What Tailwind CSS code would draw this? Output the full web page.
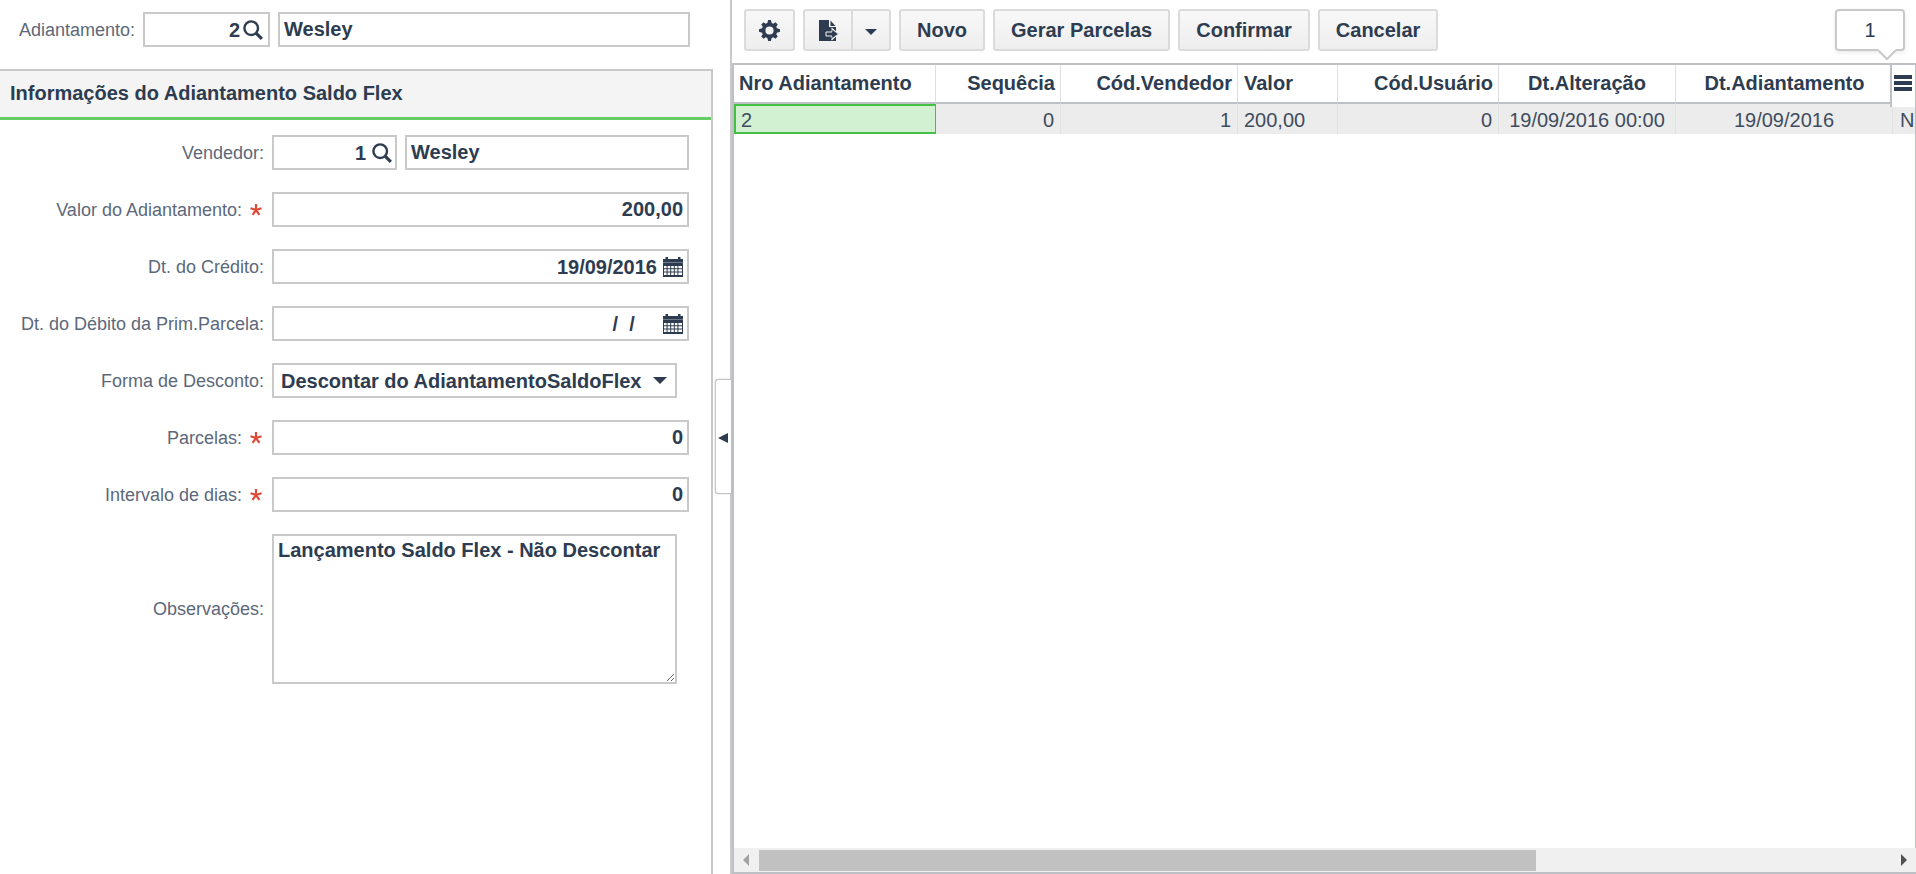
<!doctype html>
<html lang="pt-BR">
<head>
  <meta charset="UTF-8">
  <meta name="viewport" content="width=device-width, initial-scale=1.0">
  <title>Adiantamento Saldo Flex</title>
  <script src="https://cdn.jsdelivr.net/npm/@tailwindcss/browser@4"></script>
</head>
<body class="h-screen flex overflow-hidden bg-white font-['Liberation_Sans',Arial,sans-serif] text-[#2d3c50]">

  <!-- Ícones reutilizados -->
  <svg class="hidden">
    <symbol id="lupa" viewBox="0 0 20 20">
      <circle cx="8.2" cy="8.2" r="6.800" fill="none" stroke="currentColor" stroke-width="2.4"/>
      <path d="M12.800 12.800l6 6" stroke="currentColor" stroke-width="3.2"/>
    </symbol>
    <symbol id="calendario" viewBox="0 0 20 20">
      <path fill="currentColor" fill-rule="evenodd" d="M0 2h2.500V0h2.500v2h10V0h2.500v2H20v18H0zM1 9v2.300h2.600V9zM4.600 9v2.300h2.600V9zM8.200 9v2.300h2.600V9zM11.800 9v2.300h2.600V9zM15.400 9v2.300H19V9zM1 12.300v2.300h2.600v-2.300zM4.600 12.300v2.300h2.600v-2.300zM8.200 12.300v2.300h2.600v-2.300zM11.800 12.300v2.300h2.600v-2.300zM15.400 12.300v2.300H19v-2.300zM1 15.600v2.300h2.600v-2.300zM4.600 15.600v2.300h2.600v-2.300zM8.200 15.600v2.300h2.600v-2.300zM11.800 15.600v2.300h2.600v-2.300zM15.400 15.600v2.300H19v-2.300z"/>
      <path d="M0 5.500h20" stroke="#fff" stroke-opacity=".4" stroke-width=".8"/>
    </symbol>
    <symbol id="obrigatorio" viewBox="0 0 12 12">
      <path d="M6 6V0M6 6l5.500-1.800M6 6l3.400 4.800M6 6l-3.400 4.800M6 6L.5 4.200" fill="none" stroke="#dd4b39" stroke-width="2.200"/>
    </symbol>
  </svg>

  <!-- Formulário -->
  <form class="w-[730px] shrink-0 flex flex-col text-[18px]">
    <div class="flex items-center pt-3 pb-[22px] pr-10">
      <label for="adiantamento" class="w-[143px] pt-px pr-2 text-right text-[#5c687a]">Adiantamento:</label>
      <div class="w-[127px] h-[35px] flex items-center border-2 border-[#c9c9c9] pr-[5px]">
        <input id="adiantamento" value="2" class="flex-1 min-w-0 pr-[3px] text-right text-[20px] font-bold outline-none">
        <button type="button" aria-label="Pesquisar adiantamento"><svg class="size-5"><use href="#lupa"/></svg></button>
      </div>
      <input aria-label="Nome" value="Wesley" class="ml-2 flex-1 min-w-0 h-[35px] border-2 border-[#c9c9c9] px-1 text-[20px] font-bold outline-none">
    </div>

    <section class="w-[713px] flex-1 border-t-2 border-r-2 border-[#c9c9c9]">
      <h2 class="h-[49px] flex items-center border-b-3 border-[#66cc66] bg-[#f4f4f4] pl-[10px] pb-[2px] text-[20px] leading-6 font-bold">Informações do Adiantamento Saldo Flex</h2>

      <div class="flex flex-col gap-[22px] pt-[15px] pr-[22px]">
        <div class="flex items-center">
          <label for="vendedor" class="w-[272px] pt-px pr-2 text-right text-[#5c687a]">Vendedor:</label>
          <div class="w-[125px] h-[35px] flex items-center border-2 border-[#c9c9c9] pr-[3px]">
            <input id="vendedor" value="1" class="flex-1 min-w-0 pr-[6px] text-right text-[20px] font-bold outline-none">
            <button type="button" aria-label="Pesquisar vendedor"><svg class="size-5"><use href="#lupa"/></svg></button>
          </div>
          <input aria-label="Nome do vendedor" value="Wesley" class="ml-2 flex-1 min-w-0 h-[35px] border-2 border-[#c9c9c9] px-1 text-[20px] font-bold outline-none">
        </div>

        <div class="flex items-center">
          <label for="valor" class="w-[272px] pt-px pr-[10px] flex justify-end items-center gap-2 text-[#5c687a]">Valor do Adiantamento:
            <svg class="size-3"><use href="#obrigatorio"/></svg>
          </label>
          <input id="valor" value="200,00" class="flex-1 min-w-0 h-[35px] border-2 border-[#c9c9c9] px-1 text-right text-[20px] font-bold outline-none">
        </div>

        <div class="flex items-center">
          <label for="credito" class="w-[272px] pt-px pr-2 text-right text-[#5c687a]">Dt. do Crédito:</label>
          <div class="flex-1 h-[35px] flex items-center border-2 border-[#c9c9c9] pr-1">
            <input id="credito" value="19/09/2016" class="flex-1 min-w-0 pr-[6px] text-right text-[20px] font-bold outline-none">
            <button type="button" aria-label="Abrir calendário"><svg class="size-5"><use href="#calendario"/></svg></button>
          </div>
        </div>

        <div class="flex items-center">
          <label for="debito" class="w-[272px] pt-px pr-2 text-right text-[#5c687a]">Dt. do Débito da Prim.Parcela:</label>
          <div class="flex-1 h-[35px] flex items-center border-2 border-[#c9c9c9] pr-1">
            <input id="debito" value="  /  /    " class="flex-1 min-w-0 pr-[6px] text-right text-[20px] font-bold outline-none">
            <button type="button" aria-label="Abrir calendário"><svg class="size-5"><use href="#calendario"/></svg></button>
          </div>
        </div>

        <div class="flex items-center">
          <label for="forma" class="w-[272px] pt-px pr-2 text-right text-[#5c687a]">Forma de Desconto:</label>
          <div class="w-[405px] grid items-center">
            <select id="forma" class="col-start-1 row-start-1 h-[35px] appearance-none border-2 border-[#c9c9c9] pl-[7px] text-[20px] font-bold outline-none">
              <option>Descontar do AdiantamentoSaldoFlex</option>
            </select>
            <svg class="col-start-1 row-start-1 justify-self-end mr-[10px] w-[14px] h-[7px] pointer-events-none" viewBox="0 0 14 7"><path d="M0 0h14L7 7z" fill="currentColor"/></svg>
          </div>
        </div>

        <div class="flex items-center">
          <label for="parcelas" class="w-[272px] pt-px pr-[10px] flex justify-end items-center gap-2 text-[#5c687a]">Parcelas:
            <svg class="size-3"><use href="#obrigatorio"/></svg>
          </label>
          <input id="parcelas" value="0" class="flex-1 min-w-0 h-[35px] border-2 border-[#c9c9c9] px-1 text-right text-[20px] font-bold outline-none">
        </div>

        <div class="flex items-center">
          <label for="intervalo" class="w-[272px] pt-px pr-[10px] flex justify-end items-center gap-2 text-[#5c687a]">Intervalo de dias:
            <svg class="size-3"><use href="#obrigatorio"/></svg>
          </label>
          <input id="intervalo" value="0" class="flex-1 min-w-0 h-[35px] border-2 border-[#c9c9c9] px-1 text-right text-[20px] font-bold outline-none">
        </div>

        <div class="flex items-center">
          <label for="obs" class="w-[272px] pt-px pr-2 text-right text-[#5c687a]">Observações:</label>
          <textarea id="obs" class="w-[405px] h-[150px] border-2 border-[#c9c9c9] px-1 py-[2px] text-[20px] leading-6 font-bold outline-none">Lançamento Saldo Flex - Não Descontar</textarea>
        </div>
      </div>
    </section>
  </form>

  <main class="relative flex-1 min-w-0 flex flex-col border-l-2 border-[#c9c9c9]">
    <!-- Botão para recolher o formulário -->
    <button type="button" aria-label="Recolher painel" class="absolute -left-[17px] top-[379px] w-4 h-[115px] flex items-center justify-end pt-[2px] pr-[3px] border border-r-0 border-[#c4c4c4] rounded-l-[3px] bg-white shadow-[0_0_2px_rgba(0,0,0,0.2)]">
      <svg class="w-[10px] h-[10px]" viewBox="0 0 10 10"><path d="M10 0v10L0 5z" fill="currentColor"/></svg>
    </button>

    <!-- Barra de ferramentas -->
    <div class="h-[63px] flex items-start gap-2 pt-[9px] pl-3 pr-[11px] text-[20px] font-bold text-shadow-[0_1px_0_#fff]">
      <button type="button" aria-label="Configurações" class="w-[51px] h-[42px] flex items-center justify-center border-2 border-[#dbdbdb] rounded-[3px] bg-linear-to-b from-[#f8f8f8] to-[#eeeeee]">
        <svg class="size-[21px]" viewBox="0 0 22 22"><path fill="currentColor" fill-rule="evenodd" d="M9.600 0h2.800l.9 3.200 1.700.7 2.300-1.500 2.300 2.300L18.100 7l.7 1.700 3.200.9v2.800l-3.200.9-.7 1.700 1.500 2.300-2.300 2.300-2.300-1.500-1.700.7-.9 3.200H9.600l-.9-3.200-1.700-.7-2.300 1.500-2.300-2.300L3.900 15l-.7-1.700L0 12.400V9.600l3.200-.9L3.900 7 2.400 4.700l2.300-2.300L7 3.900l1.700-.7zM11 6.700a4.300 4.300 0 1 0 0 8.600 4.300 4.300 0 0 0 0-8.600z"/></svg>
      </button>
      <div class="h-[42px] flex border-2 border-[#dbdbdb] rounded-[3px] bg-linear-to-b from-[#f8f8f8] to-[#eeeeee]">
        <button type="button" aria-label="Exportar" class="w-[48px] flex items-center justify-center border-r-2 border-[#dbdbdb]">
          <svg class="w-[19px] h-[21px]" viewBox="0 0 19 21">
            <path d="M0 0h10v7h7v14H0z" fill="currentColor"/>
            <path d="M11.500 0.500l5 5.500h-5z" fill="currentColor"/>
            <path d="M12.500 8L19 14l-6.500 6" fill="none" stroke="#f4f4f4" stroke-width="1.200"/>
            <path d="M7 12h6V9.500l5.500 4.500-5.500 4.500V16H7z" fill="currentColor" stroke="#f4f4f4" stroke-width="1"/>
            <path d="M13.500 10l5.300 4-5.300 4z" fill="currentColor"/>
          </svg>
        </button>
        <button type="button" aria-label="Mais opções" class="w-9 flex items-center justify-center">
          <svg class="w-3 h-[6px] mt-[3px]" viewBox="0 0 12 6"><path d="M0 0h12L6 6z" fill="currentColor"/></svg>
        </button>
      </div>
      <button type="button" class="h-[42px] px-4 border-2 border-[#dbdbdb] rounded-[3px] bg-linear-to-b from-[#f8f8f8] to-[#eeeeee]">Novo</button>
      <button type="button" class="h-[42px] px-4 border-2 border-[#dbdbdb] rounded-[3px] bg-linear-to-b from-[#f8f8f8] to-[#eeeeee]">Gerar Parcelas</button>
      <button type="button" class="h-[42px] px-4 border-2 border-[#dbdbdb] rounded-[3px] bg-linear-to-b from-[#f8f8f8] to-[#eeeeee]">Confirmar</button>
      <button type="button" class="h-[42px] px-4 border-2 border-[#dbdbdb] rounded-[3px] bg-linear-to-b from-[#f8f8f8] to-[#eeeeee]">Cancelar</button>

      <!-- Contador de registros -->
      <div class="relative ml-auto w-[70px] h-[42px] flex items-center justify-center border-2 border-[#c9c9c9] rounded-[4px] bg-white font-normal shadow-[0_2px_4px_rgba(0,0,0,0.08)]">1
        <svg class="absolute top-[38px] right-[7px] w-[18px] h-[12px]" viewBox="0 0 18 12"><path d="M0 0h18v1L9 10 0 1z" fill="#fff"/><path d="M0 1l9 9 9-9" fill="none" stroke="#c9c9c9" stroke-width="2"/></svg>
      </div>
    </div>

    <!-- Grade -->
    <div class="flex-1 min-h-0 flex flex-col border-2 border-r-0 border-[#bdc1c5]">
      <div class="relative flex-1 overflow-hidden border-r border-[#bdc1c5]">
        <table class="w-[calc(100%+1px)] table-fixed border-separate border-spacing-0 text-[20px] leading-6 whitespace-nowrap">
          <colgroup>
            <col class="w-[202px]"><col class="w-[125px]"><col class="w-[177px]"><col class="w-[100px]"><col class="w-[161px]"><col class="w-[177px]"><col class="w-[217px]"><col>
          </colgroup>
          <thead>
            <tr class="h-[39px]">
              <th class="border-r border-b-2 border-r-[#dcdee0] border-b-[#bdc1c5] p-0 pb-[2px] pl-[5px] text-left">Nro Adiantamento</th>
              <th class="border-r border-b-2 border-r-[#dcdee0] border-b-[#bdc1c5] p-0 pb-[2px] pr-[5px] text-right">Sequêcia</th>
              <th class="border-r border-b-2 border-r-[#dcdee0] border-b-[#bdc1c5] p-0 pb-[2px] pr-[5px] text-right">Cód.Vendedor</th>
              <th class="border-r border-b-2 border-r-[#dcdee0] border-b-[#bdc1c5] p-0 pb-[2px] pl-[6px] text-left">Valor</th>
              <th class="border-r border-b-2 border-r-[#dcdee0] border-b-[#bdc1c5] p-0 pb-[2px] pr-[5px] text-right">Cód.Usuário</th>
              <th class="border-r border-b-2 border-r-[#dcdee0] border-b-[#bdc1c5] p-0 pb-[2px] text-center">Dt.Alteração</th>
              <th class="border-b-2 border-[#bdc1c5] p-0 pb-[2px] text-center">Dt.Adiantamento</th>
              <th class="p-0"></th>
            </tr>
          </thead>
          <tbody>
            <tr class="h-[30px] bg-[#ececec] text-[#3f4c5e]">
              <td class="border-2 border-r border-[#44c044] bg-[#d2f0d2] p-0 pt-[2px] pl-[5px]">2</td>
              <td class="border-r border-[#e2e2e2] p-0 pt-[2px] pr-[6px] text-right">0</td>
              <td class="border-r border-[#e2e2e2] p-0 pt-[2px] pr-[6px] text-right">1</td>
              <td class="border-r border-[#e2e2e2] p-0 pt-[2px] pl-[6px]">200,00</td>
              <td class="border-r border-[#e2e2e2] p-0 pt-[2px] pr-[6px] text-right">0</td>
              <td class="border-r border-[#e2e2e2] p-0 pt-[2px] text-center">19/09/2016 00:00</td>
              <td class="border-r border-[#e2e2e2] p-0 pt-[2px] text-center">19/09/2016</td>
              <td class="p-0 pt-[2px] pl-[7px] overflow-hidden">Não</td>
            </tr>
          </tbody>
        </table>
        <!-- Menu de colunas, fixo sobre o cabeçalho -->
        <button type="button" aria-label="Colunas" class="absolute -right-px top-0 w-[26px] h-[42px] flex flex-col items-start gap-[2px] pt-[10px] pl-[2px] border-l-2 border-[#bdc1c5] bg-white">
          <span class="w-[18px] h-1 bg-[#2d3c50]"></span>
          <span class="w-[18px] h-1 bg-[#2d3c50]"></span>
          <span class="w-[18px] h-1 bg-[#2d3c50]"></span>
        </button>
      </div>

      <!-- Barra de rolagem horizontal -->
      <div class="h-6 flex items-center bg-[#f0f0f0]">
        <span class="w-[25px] flex justify-center pr-px"><svg class="w-[6px] h-3" viewBox="0 0 6 12"><path d="M6 0v12L0 6z" fill="#a3a3a3"/></svg></span>
        <div class="flex-1"><div class="w-[68.6%] h-[21px] bg-[#c1c1c1]"></div></div>
        <span class="w-[25px] flex justify-center"><svg class="w-[6px] h-3" viewBox="0 0 6 12"><path d="M0 0v12l6-6z" fill="#505050"/></svg></span>
      </div>
    </div>
  </main>

</body>
</html>
